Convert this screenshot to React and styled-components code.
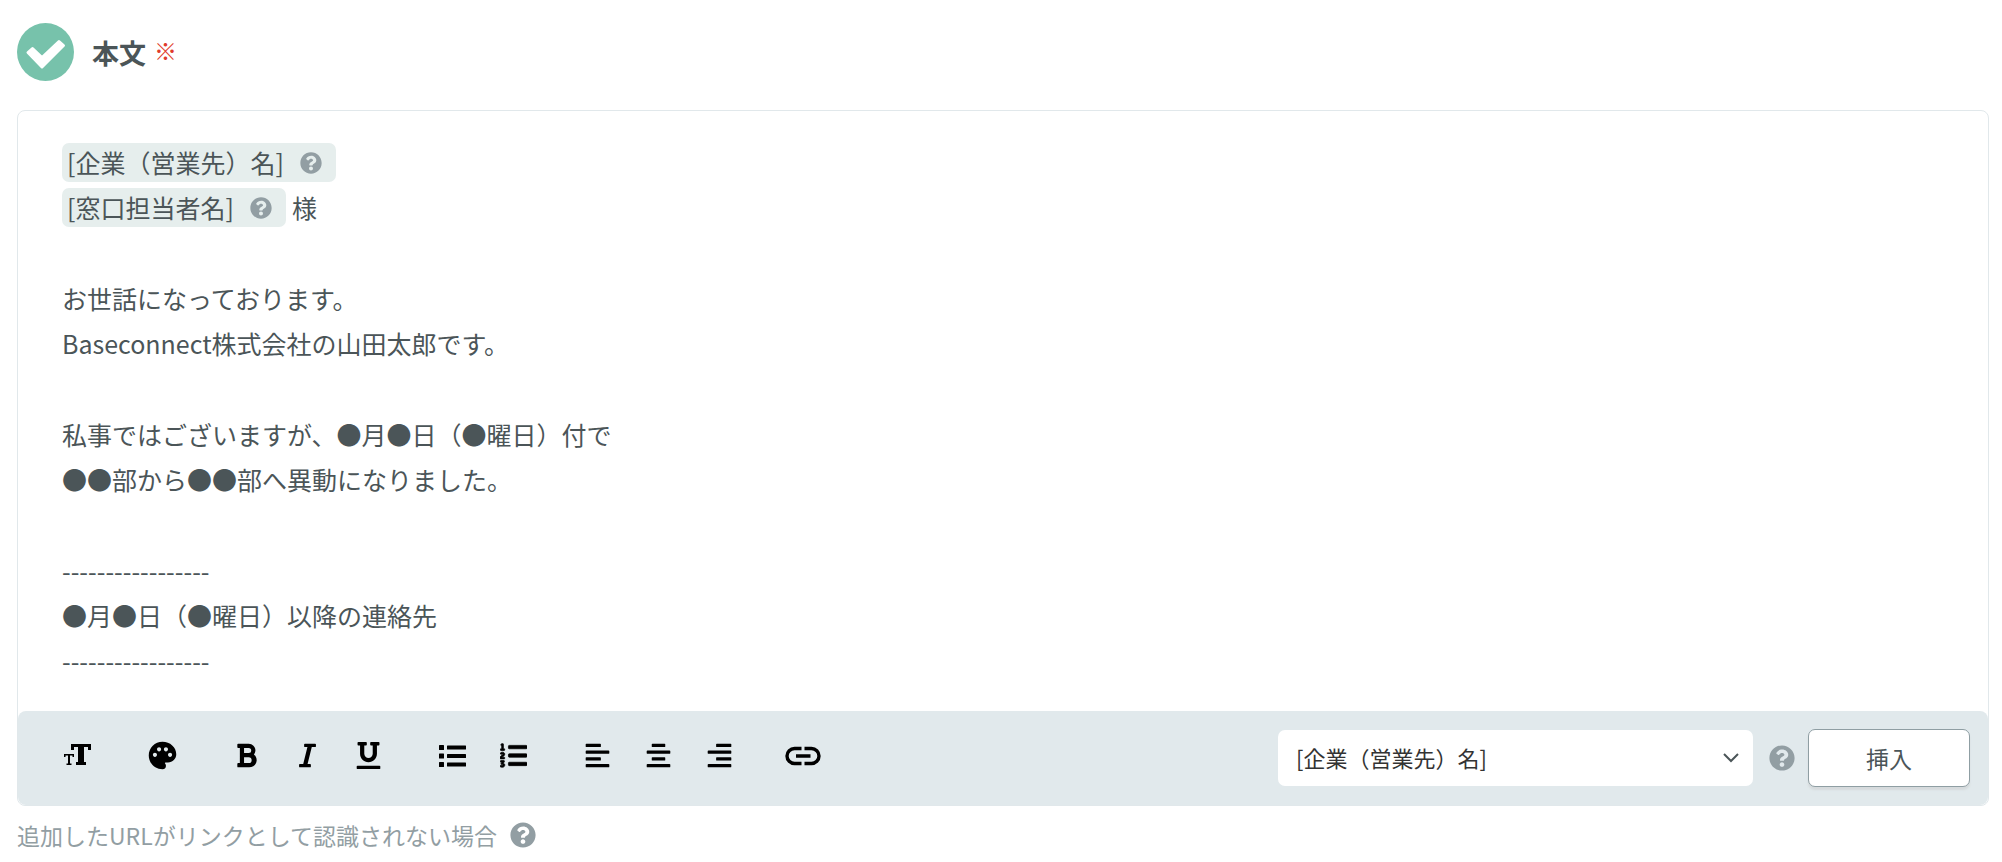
import React from "react";
import styled, { createGlobalStyle } from "styled-components";
import {
  FaAlignCenter,
  FaAlignLeft,
  FaAlignRight,
  FaBold,
  FaItalic,
  FaListOl,
  FaQuestionCircle,
  FaUnderline
} from "react-icons/fa";
import { MdPalette } from "react-icons/md";

const GlobalStyle = createGlobalStyle`
  * {
    box-sizing: border-box;
  }

  body {
    margin: 0;
    background: #fff;
    color: #4b5558;
    font-family: "Noto Sans CJK JP", sans-serif;
  }

  button,
  select {
    font-family: inherit;
  }
`;

const Page = styled.div`
  padding: 23px 13px 0 17px;
`;

const Header = styled.header`
  display: flex;
  align-items: center;
  height: 58px;
  margin-bottom: 29px;
`;

const CheckBadge = styled.svg`
  width: 57px;
  height: 58px;
  margin-right: 18px;
`;

const Title = styled.h1`
  margin: 0;
  padding-top: 2px;
  font-size: 27px;
  line-height: 40px;
`;

const Required = styled.span`
  margin-left: 8px;
  padding-bottom: 4px;
  color: #e03a2c;
  font-size: 23px;
  line-height: 30px;
`;

const Editor = styled.section`
  border: 1px solid #e1e8eb;
  border-radius: 8px;
`;

const Body = styled.div`
  display: flex;
  flex-direction: column;
  gap: 46px;
  padding: 29px 44px 28px;
  font-size: 25px;
  line-height: 45px;
`;

const Paragraph = styled.p`
  margin: 0;
`;

const Tag = styled.span`
  display: inline-flex;
  align-items: center;
  gap: 16px;
  margin-right: 6px;
  padding: 0 14px 0 5px;
  border-radius: 7px;
  background: #e6eeed;
  line-height: 39px;
`;

const HelpIcon = styled(FaQuestionCircle)`
  flex: none;
  color: #929ea3;
`;

const Toolbar = styled.div`
  display: flex;
  align-items: center;
  justify-content: space-between;
  height: 94px;
  padding: 0 18px 0 42px;
  border-radius: 8px;
  background: #e1e9ec;
`;

const Tools = styled.div`
  display: flex;
  gap: 48px;
  padding-bottom: 5px;
`;

const ToolGroup = styled.div`
  display: flex;
  gap: 25px;
`;

const ToolButton = styled.button`
  display: flex;
  align-items: center;
  justify-content: center;
  width: 36px;
  height: 36px;
  padding: 0;
  border: 0;
  background: none;
  color: #000;
  cursor: pointer;
`;

const Insert = styled.div`
  display: flex;
  align-items: center;
`;

const SelectWrapper = styled.div`
  display: grid;
  align-items: center;
  width: 475px;
  margin-right: 16px;

  > * {
    grid-area: 1 / 1;
  }

  svg {
    justify-self: end;
    margin-right: 14px;
    pointer-events: none;
  }
`;

const Select = styled.select`
  width: 100%;
  height: 56px;
  padding: 0 40px 2px 18px;
  border: 0;
  border-radius: 7px;
  appearance: none;
  background: #fff;
  color: #333;
  font-size: 22px;
`;

const InsertButton = styled.button`
  width: 162px;
  height: 58px;
  margin-left: 13px;
  border: 1px solid #8f9ea3;
  border-radius: 7px;
  background: #fff;
  box-shadow: 0 3px 2px #d5dadc;
  color: #4b5558;
  font-size: 23px;
  cursor: pointer;
`;

const Note = styled.a`
  display: inline-flex;
  align-items: center;
  gap: 13px;
  margin-top: 11px;
  color: #929ea3;
  font-size: 23px;
  line-height: 36px;
  text-decoration: none;
`;

const Icon = ({ children }) => (
  <svg
    width="36"
    height="36"
    viewBox="0 0 36 36"
    fill="currentColor"
    aria-hidden="true"
  >
    {children}
  </svg>
);

const TextSizeIcon = () => (
  <Icon>
    <path d="M11 6H31V12H28V9H24V24H26V27H16V24H18V9H14V12H11Z" />
    <path d="M4 16H14V19H12.5V17.5H10V25.5H11.5V27H6.5V25.5H8V17.5H5.5V19H4Z" />
  </Icon>
);

const BulletListIcon = () => (
  <Icon>
    {[9.5, 18, 26.5].map(y => (
      <React.Fragment key={y}>
        <rect x="5" y={y - 2.5} width="5" height="5" rx="0.5" />
        <rect x="13" y={y - 2} width="19" height="4" rx="0.5" />
      </React.Fragment>
    ))}
  </Icon>
);

const LinkIcon = () => (
  <Icon>
    <path
      d="M16.5 10.5H9.5A7.5 7.5 0 0 0 9.5 25.5H16.5M19.5 10.5H26.5A7.5 7.5 0 0 1 26.5 25.5H19.5M11 18H25.5"
      fill="none"
      stroke="currentColor"
      strokeWidth="3.4"
    />
  </Icon>
);

const groups = [
  [{ name: "文字サイズ", icon: <TextSizeIcon /> }],
  [{ name: "文字色", icon: <MdPalette size={33} /> }],
  [
    { name: "太字", icon: <FaBold size={27} /> },
    { name: "斜体", icon: <FaItalic size={27} /> },
    { name: "下線", icon: <FaUnderline size={27} /> }
  ],
  [
    { name: "箇条書き", icon: <BulletListIcon /> },
    { name: "番号付きリスト", icon: <FaListOl size={27} strokeWidth={14} /> }
  ],
  [
    { name: "左揃え", icon: <FaAlignLeft size={27} /> },
    { name: "中央揃え", icon: <FaAlignCenter size={27} /> },
    { name: "右揃え", icon: <FaAlignRight size={27} /> }
  ],
  [{ name: "リンク", icon: <LinkIcon /> }]
];

export default () => (
  <Page>
    <GlobalStyle />
    <Header>
      <CheckBadge viewBox="0 0 57 58" aria-hidden="true">
        <ellipse cx="28.5" cy="29" rx="28.5" ry="29" fill="#77c2ab" />
        <path
          d="M11 29.5L15.5 25.5L25 34.5L42 18.5L46.5 22.5L25 44Z"
          fill="#fff"
          stroke="#fff"
          strokeWidth="3"
          strokeLinejoin="round"
        />
      </CheckBadge>
      <Title>本文</Title>
      <Required>※</Required>
    </Header>

    <Editor>
      <Body>
        <Paragraph>
          <Tag>
            [企業（営業先）名]
            <HelpIcon size={22} />
          </Tag>
          <br />
          <Tag>
            [窓口担当者名]
            <HelpIcon size={22} />
          </Tag>
          様
        </Paragraph>
        <Paragraph>
          お世話になっております。
          <br />
          Baseconnect株式会社の山田太郎です。
        </Paragraph>
        <Paragraph>
          私事ではございますが、●月●日（●曜日）付で
          <br />
          ●●部から●●部へ異動になりました。
        </Paragraph>
        <Paragraph>
          -----------------
          <br />
          ●月●日（●曜日）以降の連絡先
          <br />
          -----------------
        </Paragraph>
      </Body>

      <Toolbar>
        <Tools>
          {groups.map((tools, i) => (
            <ToolGroup key={i}>
              {tools.map(({ name, icon }) => (
                <ToolButton key={name} type="button" aria-label={name}>
                  {icon}
                </ToolButton>
              ))}
            </ToolGroup>
          ))}
        </Tools>
        <Insert>
          <SelectWrapper>
            <Select aria-label="差し込み項目">
              <option>[企業（営業先）名]</option>
              <option>[窓口担当者名]</option>
            </Select>
            <svg width="16" height="10" viewBox="0 0 16 10" aria-hidden="true">
              <path
                d="M1 1L8 8L15 1"
                fill="none"
                stroke="#4b5558"
                strokeWidth="2"
              />
            </svg>
          </SelectWrapper>
          <HelpIcon size={26} />
          <InsertButton type="button">挿入</InsertButton>
        </Insert>
      </Toolbar>
    </Editor>

    <Note href="#help">
      追加したURLがリンクとして認識されない場合
      <HelpIcon size={26} />
    </Note>
  </Page>
);
